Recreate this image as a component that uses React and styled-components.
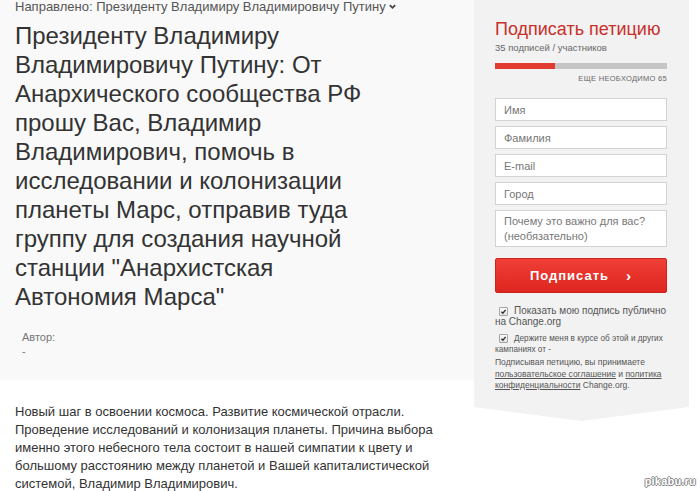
import React from "react";
import styled, { createGlobalStyle } from "styled-components";

const GlobalStyle = createGlobalStyle`
  html, body {
    margin: 0;
    padding: 0;
    background: #ffffff;
    font-family: "Liberation Sans", Arial, sans-serif;
  }
`;

const App = () => {
  return (
    <>
      <GlobalStyle />
      <Page>
        <Main>
          <Header>
            <Target>
              Направлено: Президенту Владимиру Владимировичу Путину
              <Chevron viewBox="0 0 10 10">
                <path d="M2 3.5 L5 6.5 L8 3.5" />
              </Chevron>
            </Target>
            <Title>
              Президенту Владимиру Владимировичу Путину: От Анархического
              сообщества РФ прошу Вас, Владимир Владимирович, помочь в
              исследовании и колонизации планеты Марс, отправив туда группу для
              создания научной станции "Анархистская Автономия Марса"
            </Title>
            <Author>
              <AuthorLabel>Автор:</AuthorLabel>
              <AuthorName>-</AuthorName>
            </Author>
          </Header>
          <Body>
            Новый шаг в освоении космоса. Развитие космической отрасли.
            Проведение исследований и колонизация планеты. Причина выбора
            именно этого небесного тела состоит в нашей симпатии к цвету и
            большому расстоянию между планетой и Вашей капиталистической
            системой, Владимир Владимирович.
          </Body>
        </Main>
        <Sidebar>
          <SignTitle>Подписать петицию</SignTitle>
          <Count>35 подписей / участников</Count>
          <Progress>
            <ProgressFill style={{ width: `${(35 / 100) * 100}%` }} />
          </Progress>
          <Remaining>ЕЩЕ НЕОБХОДИМО 65</Remaining>
          <Form>
            <Field placeholder="Имя" readOnly />
            <Field placeholder="Фамилия" readOnly />
            <Field placeholder="E-mail" readOnly />
            <Field placeholder="Город" readOnly />
            <Area placeholder="Почему это важно для вас? (необязательно)" readOnly />
            <SignButton>
              Подписать<Arrow>›</Arrow>
            </SignButton>
          </Form>
          <Option size="10px" line="11px">
            <Check>
              <svg viewBox="0 0 10 10">
                <path d="M2 5.2 L4.2 7.4 L8 2.6" />
              </svg>
            </Check>
            Показать мою подпись публично на Change.org
          </Option>
          <Option size="8.2px" line="11px">
            <Check>
              <svg viewBox="0 0 10 10">
                <path d="M2 5.2 L4.2 7.4 L8 2.6" />
              </svg>
            </Check>
            Держите меня в курсе об этой и других кампаниях от -
          </Option>
          <Legal>
            Подписывая петицию, вы принимаете{" "}
            <LegalLink>пользовательское соглашение</LegalLink> и{" "}
            <LegalLink>политика</LegalLink>{" "}
            <LegalLink>конфиденциальности</LegalLink> Change.org.
          </Legal>
        </Sidebar>
        <Watermark>pikabu.ru</Watermark>
      </Page>
    </>
  );
};

const Page = styled.div`
  position: relative;
  display: flex;
  align-items: flex-start;
  width: 700px;
  height: 491px;
  overflow: hidden;
  background: #ffffff;
`;
const Main = styled.div`
  width: 474px;
  flex-shrink: 0;
  display: flex;
  flex-direction: column;
`;
const Header = styled.div`
  background: #f9f9f9;
  padding: 0 10px 22px 15px;
`;
const Target = styled.div`
  display: flex;
  align-items: center;
  font-size: 13px;
  line-height: 15px;
  color: #555;
  margin-top: -1px;
`;
const Chevron = styled.svg`
  width: 9px;
  height: 9px;
  margin-left: 2px;
  fill: none;
  stroke: #444;
  stroke-width: 2;
`;
const Title = styled.h1`
  margin: 7px 0 0;
  font-weight: normal;
  font-size: 24px;
  line-height: 29px;
  color: #333;
  width: 372px;
`;
const Author = styled.div`
  margin-top: 19px;
  padding-left: 7px;
  font-size: 11px;
  line-height: 14px;
  color: #777;
`;
const AuthorLabel = styled.div``;
const AuthorName = styled.div``;
const Body = styled.p`
  margin: 0;
  padding: 23px 20px 0 15px;
  font-size: 13px;
  line-height: 18px;
  color: #333;
`;
const Sidebar = styled.div`
  width: 215px;
  flex-shrink: 0;
  box-sizing: border-box;
  height: 421px;
  padding: 18px 22px 0 21px;
  background: #f2f2f2;
  clip-path: polygon(0 0, 100% 0, 100% 407px, 50% 100%, 0 407px);
`;
const SignTitle = styled.div`
  font-size: 18px;
  line-height: 22px;
  color: #c8302b;
  white-space: nowrap;
`;
const Count = styled.div`
  margin-top: 1px;
  font-size: 9.5px;
  line-height: 14px;
  color: #666;
`;
const Progress = styled.div`
  margin-top: 8px;
  height: 6px;
  background: #c6c6c6;
`;
const ProgressFill = styled.div`
  height: 100%;
  background: #e03a31;
`;
const Remaining = styled.div`
  margin-top: 4px;
  text-align: right;
  font-size: 7.5px;
  line-height: 11px;
  color: #666;
  letter-spacing: 0.3px;
`;
const Form = styled.div`
  margin-top: 14px;
  display: flex;
  flex-direction: column;
  gap: 5px;
`;
const Field = styled.input`
  box-sizing: border-box;
  height: 23px;
  width: 100%;
  border: 1px solid #d2d2d2;
  background: #fff;
  padding: 0 8px;
  font-family: inherit;
  font-size: 11px;
  color: #333;
  outline: none;
  &::placeholder {
    color: #777;
  }
`;
const Area = styled.textarea`
  box-sizing: border-box;
  height: 37px;
  width: 100%;
  border: 1px solid #d2d2d2;
  background: #fff;
  padding: 3px 8px;
  font-family: inherit;
  font-size: 11px;
  line-height: 15px;
  resize: none;
  overflow: hidden;
  outline: none;
  &::placeholder {
    color: #777;
  }
`;
const SignButton = styled.button`
  margin-top: 6px;
  height: 35px;
  width: 100%;
  border: 1px solid #c9241d;
  border-radius: 2px;
  background: linear-gradient(#ef3f36, #de261f);
  color: #fff;
  font-family: inherit;
  font-weight: bold;
  font-size: 13px;
  letter-spacing: 1px;
  display: flex;
  align-items: center;
  justify-content: center;
`;
const Arrow = styled.span`
  margin-left: 17px;
  font-size: 15px;
  font-weight: bold;
`;
const Option = styled.div`
  margin-top: 12px;
  font-size: ${({ size }) => size};
  line-height: ${({ line }) => line};
  color: #555;
  & + & {
    margin-top: 6px;
  }
`;
const Check = styled.span`
  display: inline-flex;
  box-sizing: border-box;
  width: 9px;
  height: 9px;
  margin: 0 6px 0 4px;
  vertical-align: -1px;
  border: 1px solid #a5a5a5;
  border-radius: 1px;
  background: linear-gradient(#fdfdfd, #e3e3e3);
  svg {
    width: 100%;
    height: 100%;
    fill: none;
    stroke: #333;
    stroke-width: 2;
  }
`;
const Legal = styled.div`
  margin-top: 2px;
  font-size: 8.5px;
  line-height: 11.5px;
  color: #555;
`;
const LegalLink = styled.span`
  text-decoration: underline;
`;
const Watermark = styled.div`
  position: absolute;
  right: 4px;
  bottom: 4px;
  font-size: 11px;
  font-weight: bold;
  color: #fff;
  letter-spacing: 0.2px;
  text-shadow: -1px 0 #888, 1px 0 #888, 0 -1px #888, 0 1px #888;
`;

export default App;
